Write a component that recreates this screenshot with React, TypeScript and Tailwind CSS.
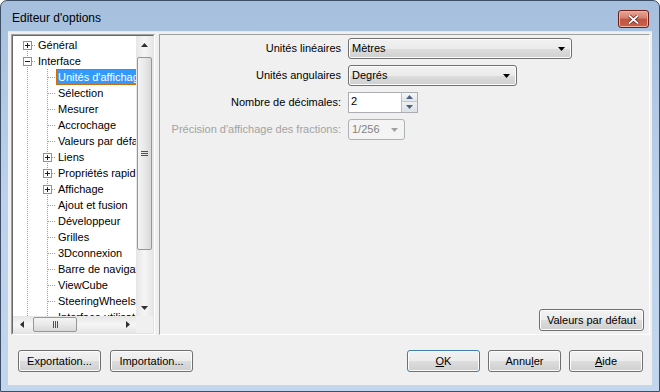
import React from 'react';

const font = "font-['Liberation_Sans',Arial,sans-serif]";

type TreeItem = {
  label: string;
  level: 0 | 1;
  expander?: 'plus' | 'minus';
  selected?: boolean;
  first?: boolean;
};

const items: TreeItem[] = [
  { label: 'Général', level: 0, expander: 'plus', first: true },
  { label: 'Interface', level: 0, expander: 'minus' },
  { label: "Unités d'affichage", level: 1, selected: true },
  { label: 'Sélection', level: 1 },
  { label: 'Mesurer', level: 1 },
  { label: 'Accrochage', level: 1 },
  { label: 'Valeurs par défaut', level: 1 },
  { label: 'Liens', level: 1, expander: 'plus' },
  { label: 'Propriétés rapides', level: 1, expander: 'plus' },
  { label: 'Affichage', level: 1, expander: 'plus' },
  { label: 'Ajout et fusion', level: 1 },
  { label: 'Développeur', level: 1 },
  { label: 'Grilles', level: 1 },
  { label: '3Dconnexion', level: 1 },
  { label: 'Barre de navigation', level: 1 },
  { label: 'ViewCube', level: 1 },
  { label: 'SteeringWheels', level: 1 },
  { label: 'Interface utilisateur', level: 1 },
];

const Expander = ({ x, kind }: { x: number; kind: 'plus' | 'minus' }) => (
  <g>
    <rect x={x + 0.5} y={4.5} width={8} height={8} fill="#fff" stroke="#919191" />
    <line x1={x + 2} y1={8.5} x2={x + 7} y2={8.5} stroke="#1e1e1e" />
    {kind === 'plus' && <line x1={x + 4.5} y1={6} x2={x + 4.5} y2={11} stroke="#1e1e1e" />}
  </g>
);

const TreeRow = ({ item }: { item: TreeItem }) => {
  const gutter = item.level === 0 ? 23 : 43;
  const dot = { stroke: '#a0a0a0', strokeDasharray: '1 1' };
  return (
    <div className="flex h-[16px] items-center whitespace-nowrap">
      <svg width={gutter} height={16} className="shrink-0" shapeRendering="crispEdges">
        <line x1={14.5} y1={item.first ? 8 : 0} x2={14.5} y2={16} {...dot} />
        {item.level === 0 ? (
          <>
            <line x1={19} y1={8.5} x2={23} y2={8.5} {...dot} />
            {item.expander && <Expander x={10} kind={item.expander} />}
          </>
        ) : (
          <>
            <line x1={34.5} y1={0} x2={34.5} y2={16} {...dot} />
            <line x1={item.expander ? 39 : 35} y1={8.5} x2={43} y2={8.5} {...dot} />
            {item.expander && <Expander x={30} kind={item.expander} />}
          </>
        )}
      </svg>
      <span
        className={
          item.selected
            ? 'h-[16px] leading-[14px] px-[1px] bg-[#3399ff] text-white border border-dotted border-[#cc6600]'
            : 'px-[2px] leading-[16px] text-black'
        }
      >
        {item.label}
      </span>
    </div>
  );
};

const Arrow = ({ dir, color = '#000' }: { dir: 'up' | 'down' | 'left' | 'right'; color?: string }) => {
  const pts = {
    up: '0,4 7,4 3.5,0',
    down: '0,0 7,0 3.5,4',
    left: '4,0 4,7 0,3.5',
    right: '0,0 0,7 4,3.5',
  }[dir];
  const horiz = dir === 'left' || dir === 'right';
  return (
    <svg width={horiz ? 4 : 7} height={horiz ? 7 : 4}>
      <polygon points={pts} fill={color} />
    </svg>
  );
};

const VScrollbar = () => (
  <div className="flex w-[17px] flex-col bg-gradient-to-r from-[#e6e6e6] via-[#f5f5f5] to-[#e6e6e6]">
    <div className="flex h-[17px] items-center justify-center">
      <Arrow dir="up" color="#303030" />
    </div>
    <div className="mx-[1px] mt-[4px] flex h-[193px] items-center justify-center rounded-[2px] border border-[#979797] bg-gradient-to-r from-[#f4f4f4] via-[#e9e9e9] to-[#d8d8d8]">
      <div className="flex flex-col gap-[1px]">
        <div className="h-[1px] w-[7px] bg-[#505050]" />
        <div className="h-[1px] w-[7px] bg-[#505050]" />
        <div className="h-[1px] w-[7px] bg-[#505050]" />
      </div>
    </div>
    <div className="flex-1" />
    <div className="flex h-[17px] items-center justify-center">
      <Arrow dir="down" color="#303030" />
    </div>
  </div>
);

const HScrollbar = () => (
  <div className="flex h-[17px] bg-gradient-to-b from-[#e6e6e6] via-[#f5f5f5] to-[#e6e6e6]">
    <div className="flex w-[17px] items-center justify-center">
      <Arrow dir="left" color="#303030" />
    </div>
    <div className="my-[1px] ml-[3px] flex w-[44px] items-center justify-center gap-[1px] rounded-[2px] border border-[#979797] bg-gradient-to-b from-[#f4f4f4] via-[#e9e9e9] to-[#d8d8d8]">
      <div className="h-[7px] w-[1px] bg-[#505050]" />
      <div className="h-[7px] w-[1px] bg-[#505050]" />
      <div className="h-[7px] w-[1px] bg-[#505050]" />
    </div>
    <div className="flex-1" />
    <div className="flex w-[17px] items-center justify-center">
      <Arrow dir="right" color="#303030" />
    </div>
  </div>
);

const Button = ({
  children,
  width,
  primary,
}: {
  children: React.ReactNode;
  width: string;
  primary?: boolean;
}) => (
  <div
    className={`flex h-[22px] ${width} items-center justify-center rounded-[3px] border ${
      primary ? 'border-[#3c7fb1]' : 'border-[#707070]'
    } bg-[linear-gradient(to_bottom,#f2f2f2_0%,#ebebeb_50%,#dddddd_51%,#cfcfcf_100%)] shadow-[inset_0_0_0_1px_#fcfcfc] text-[11px] text-black`}
  >
    {children}
  </div>
);

const Combo = ({ value, width, disabled }: { value: string; width: string; disabled?: boolean }) => (
  <div
    className={`flex h-[21px] ${width} items-center justify-between rounded-[3px] border pl-[3px] pr-[6px] ${
      disabled
        ? 'border-[#adb2b5] bg-[#f4f4f4] text-[#838383]'
        : 'border-[#707070] bg-[linear-gradient(to_bottom,#f2f2f2_0%,#ebebeb_50%,#dddddd_51%,#cfcfcf_100%)] text-black shadow-[inset_0_0_0_1px_#fcfcfc]'
    }`}
  >
    <span>{value}</span>
    <Arrow dir="down" color={disabled ? '#a0a0a0' : '#000'} />
  </div>
);

const Spinner = () => (
  <div className="flex h-[21px] w-[70px] border border-[#abadb3] bg-white">
    <span className="flex-1 pl-[2px] leading-[17px]">2</span>
    <div className="flex w-[16px] flex-col border-l border-[#c0c0c0]">
      <div className="flex h-[9px] items-center justify-center border-b border-[#b8c6d6] bg-gradient-to-b from-[#f6f6f6] to-[#e2e6ea]">
        <Arrow dir="up" color="#4d6185" />
      </div>
      <div className="flex flex-1 items-center justify-center bg-gradient-to-b from-[#eef0f2] to-[#dde2e7]">
        <Arrow dir="down" color="#4d6185" />
      </div>
    </div>
  </div>
);

const FormRow = ({ label, children, disabled }: { label: string; children: React.ReactNode; disabled?: boolean }) => (
  <div className="flex h-[21px] items-center gap-[7px]">
    <div className={`w-[181px] text-right ${disabled ? 'text-[#a3a3a3]' : 'text-black'}`}>{label}</div>
    {children}
  </div>
);

export default function App() {
  return (
    <div className={`${font} flex h-[392px] w-[660px] flex-col overflow-hidden rounded-t-[7px] border border-[#3d4f66] bg-gradient-to-b from-[#a5bfdd] via-[#bcd2ea] to-[#c2d7ee] text-[11px]`}>
      {/* title bar */}
      <div className="flex h-[30px] shrink-0 items-start justify-between pl-[11px] pr-[10px]">
        <span className="pt-[10px] text-[12px] leading-[14px] text-black">Editeur d'options</span>
        <div className="mt-[9px] flex h-[18px] w-[31px] items-center justify-center rounded-[3px] border border-[#6b1f17] bg-[linear-gradient(to_bottom,#e8a697_0%,#d47f6d_45%,#c25442_50%,#c9614b_100%)] shadow-[inset_0_0_0_1px_#eab3a6]">
          <svg width="11" height="9" viewBox="0 0 11 9">
            <path d="M1 0.5 L5.5 4.5 L10 0.5 M1 8.5 L5.5 4.5 L10 8.5" stroke="#5a1a12" strokeWidth="3.2" fill="none" />
            <path d="M1 0.5 L5.5 4.5 L10 0.5 M1 8.5 L5.5 4.5 L10 8.5" stroke="#fff" strokeWidth="1.8" fill="none" />
          </svg>
        </div>
      </div>

      {/* client area */}
      <div className="mx-[7px] flex h-[354px] flex-col border-t border-[#dfe8f2] bg-[#f0f0f0]">
        <div className="flex gap-[4px] pl-[3px] pr-[2px] pt-[2px]">
          {/* tree */}
          <div className="h-[301px] w-[144px] border border-b-white border-l-[#a0a0a0] border-r-white border-t-[#a0a0a0]">
            <div className="flex h-full flex-col border border-b-[#e3e3e3] border-l-[#696969] border-r-[#e3e3e3] border-t-[#696969] bg-white">
              <div className="flex min-h-0 flex-1">
                <div className="min-w-0 flex-1 overflow-hidden pt-[1px]">
                  {items.map((it) => (
                    <TreeRow key={it.label} item={it} />
                  ))}
                </div>
                <VScrollbar />
              </div>
              <div className="flex">
                <div className="flex-1">
                  <HScrollbar />
                </div>
                <div className="h-[17px] w-[17px] bg-[#f0f0f0]" />
              </div>
            </div>
          </div>

          {/* options panel */}
          <div className="flex h-[301px] flex-1 flex-col border border-b-white border-l-[#a0a0a0] border-r-white border-t-[#a0a0a0]">
            <div className="flex flex-col gap-[6px] pt-[3px]">
              <FormRow label="Unités linéaires">
                <Combo value="Mètres" width="w-[224px]" />
              </FormRow>
              <FormRow label="Unités angulaires">
                <Combo value="Degrés" width="w-[169px]" />
              </FormRow>
              <FormRow label="Nombre de décimales:">
                <Spinner />
              </FormRow>
              <FormRow label="Précision d'affichage des fractions:" disabled>
                <Combo value="1/256" width="w-[57px]" disabled />
              </FormRow>
            </div>
            <div className="mt-auto flex justify-end pb-[3px] pr-[5px]">
              <Button width="w-[105px]">Valeurs par défaut</Button>
            </div>
          </div>
        </div>

        {/* bottom buttons */}
        <div className="mt-[15px] flex items-center pl-[10px] pr-[9px]">
          <div className="flex gap-[9px]">
            <Button width="w-[83px]">Exportation...</Button>
            <Button width="w-[83px]">Importation...</Button>
          </div>
          <div className="ml-auto flex gap-[8px]">
            <Button width="w-[73px]" primary>
              <span>
                <span className="underline">O</span>K
              </span>
            </Button>
            <Button width="w-[73px]">
              <span>
                Annu<span className="underline">l</span>er
              </span>
            </Button>
            <Button width="w-[74px]">
              <span>
                <span className="underline">A</span>ide
              </span>
            </Button>
          </div>
        </div>
      </div>
    </div>
  );
}
